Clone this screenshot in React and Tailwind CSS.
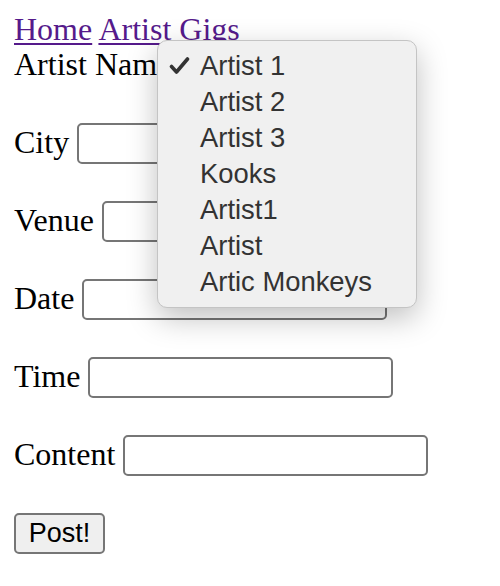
import React from "react";

const serif = { fontFamily: '"Liberation Serif", "Times New Roman", serif' };

function Field({ label }) {
  return (
    <div className="flex h-[40px] items-center gap-[8px]">
      <span className="pb-[3px] text-[32px] leading-[36px] text-black">{label}</span>
      <div className="h-[41px] w-[305px] rounded-[5px] border-2 border-[#767676] bg-white"></div>
    </div>
  );
}

export default function App() {
  const items = ["Artist 1", "Artist 2", "Artist 3", "Kooks", "Artist1", "Artist", "Artic Monkeys"];
  return (
    <div className="relative h-[586px] w-[500px] overflow-hidden bg-white" style={serif}>
      <div className="pl-[14px] pt-[11px]">
        <div className="h-[34px] text-[32px] leading-[36px]">
          <a className="text-[#551a8b] underline decoration-[2px] underline-offset-[3px]">Home</a>{" "}
          <a className="text-[#551a8b] underline decoration-[2px] underline-offset-[3px]">Artist Gigs</a>
        </div>
        <div className="flex flex-col gap-[38px]">
          <div className="flex h-[40px] items-center gap-[8px]">
            <span className="pb-[2px] text-[32px] leading-[36px] text-black">Artist Name</span>
            <div className="h-[40px] w-[150px] rounded-[5px] border-2 border-[#767676] bg-[#efefef]"></div>
          </div>
          <Field label="City" />
          <Field label="Venue" />
          <Field label="Date" />
          <Field label="Time" />
          <Field label="Content" />
          <div className="flex h-[40px] items-center">
            <button
              className="flex h-[41px] w-[91px] items-center justify-center rounded-[5px] border-2 border-[#767676] bg-[#efefef] text-[27px] text-black"
              style={{ fontFamily: '"Liberation Sans", Arial, sans-serif' }}
            >
              Post!
            </button>
          </div>
        </div>
      </div>

      <div
        className="absolute left-[157px] top-[40px] w-[260px] rounded-[10px] border border-[#c4c4c4] bg-[#f0f0f0] py-[7px] shadow-[0_10px_30px_rgba(0,0,0,0.25)]"
        style={{ fontFamily: '"Liberation Sans", Arial, sans-serif' }}
      >
        {items.map((it, i) => (
          <div key={it} className="flex h-[36px] items-center text-[27.4px] leading-[36px] text-[#333333]">
            <div className="flex w-[42px] justify-start pl-[11px]">
              {i === 0 && (
                <svg width="21" height="18" viewBox="0 0 21 18">
                  <polyline points="2.5,9.5 7.5,15 18.5,2" fill="none" stroke="#333" strokeWidth="3.6" strokeLinecap="round" strokeLinejoin="round" />
                </svg>
              )}
            </div>
            <span>{it}</span>
          </div>
        ))}
      </div>
    </div>
  );
}
